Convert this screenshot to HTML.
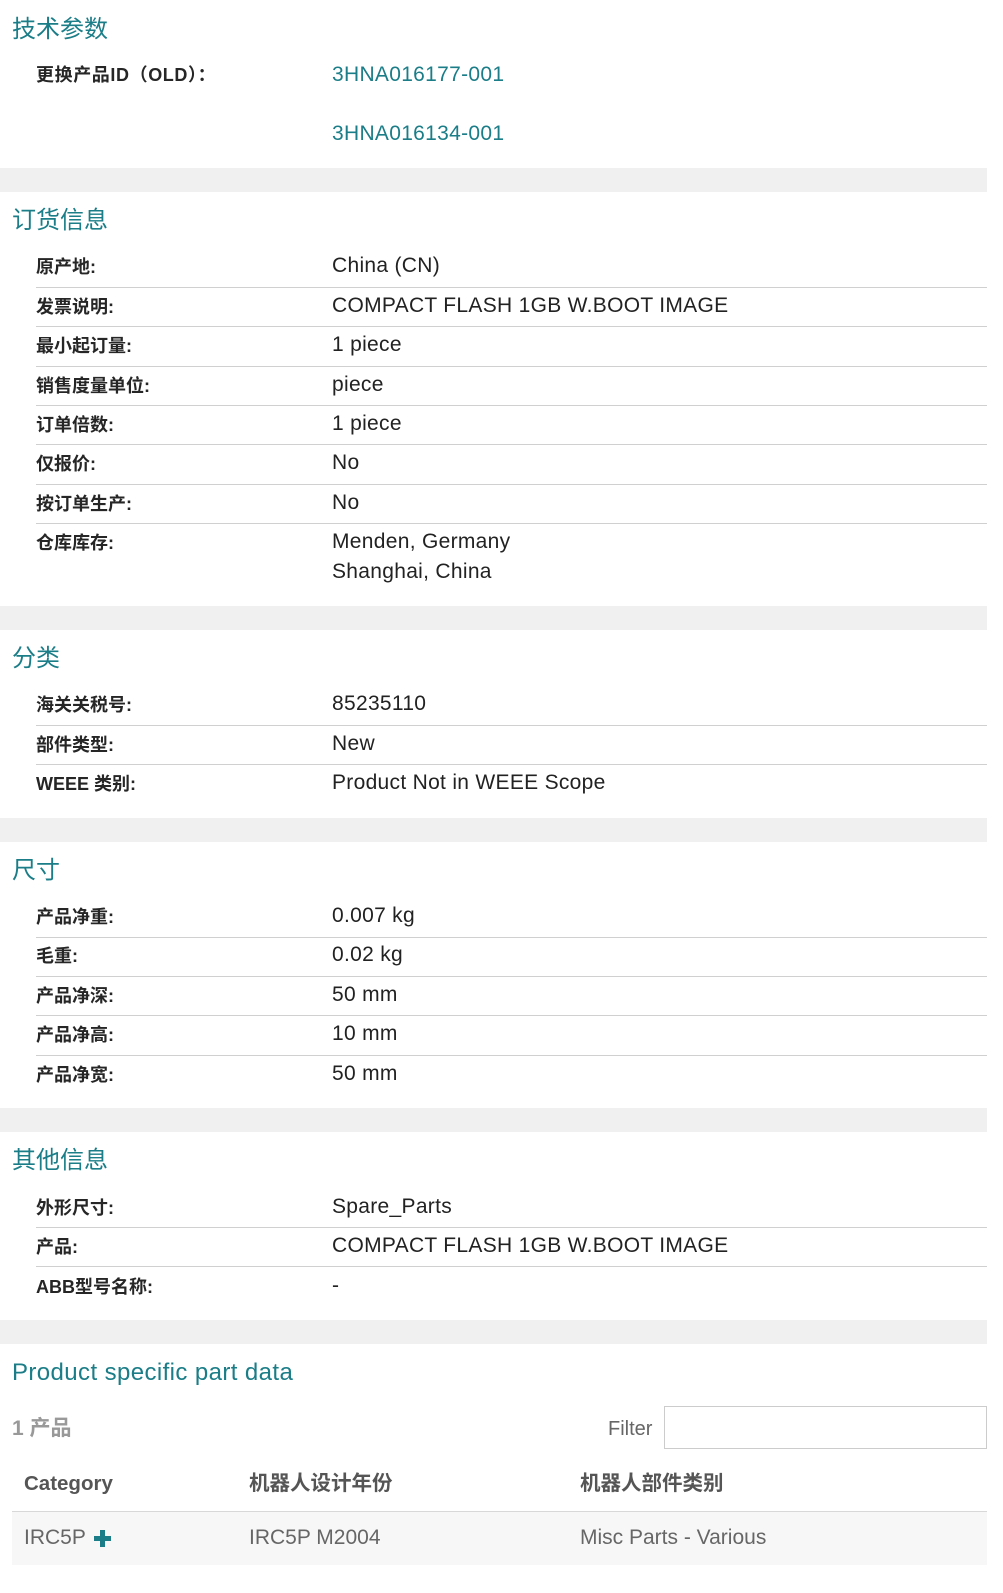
<!DOCTYPE html>
<html><head><meta charset="utf-8"><style>
body{margin:0;width:1003px;height:1593px;position:relative;background:#fff;font-family:"Liberation Sans","Noto Sans CJK SC",sans-serif;overflow:hidden}
div{position:absolute;white-space:nowrap}
.t{left:12px;font-size:24px;color:#1a7d87;line-height:28px}
.l{left:36px;font-size:18px;font-weight:bold;color:#262626;line-height:22px;margin-top:0px}
.v{left:332px;font-size:21px;color:#222;line-height:22px;letter-spacing:0.3px}
.a{color:#1a7d87}
.ln{left:36px;width:951px;height:1px;background:#d0d0d0}
.b{left:0;width:987px;height:24px;background:#f0f0f0}
.g{color:#666;font-size:21px;line-height:22px}
</style></head><body>
<div class="t" style="top:16px">技术参数</div>
<div class="l" style="top:64px;letter-spacing:0.6px">更换产品ID（OLD）：</div>
<div class="v a" style="top:64px">3HNA016177-001</div>
<div class="v a" style="top:123px">3HNA016134-001</div>
<div class="b" style="top:168px"></div>

<div class="t" style="top:207px">订货信息</div>
<div class="l" style="top:256px">原产地:</div><div class="v" style="top:255px">China (CN)</div>
<div class="ln" style="top:287px"></div>
<div class="l" style="top:296px">发票说明:</div><div class="v" style="top:295px">COMPACT FLASH 1GB W.BOOT IMAGE</div>
<div class="ln" style="top:326px"></div>
<div class="l" style="top:335px">最小起订量:</div><div class="v" style="top:334px">1 piece</div>
<div class="ln" style="top:366px"></div>
<div class="l" style="top:375px">销售度量单位:</div><div class="v" style="top:374px">piece</div>
<div class="ln" style="top:405px"></div>
<div class="l" style="top:414px">订单倍数:</div><div class="v" style="top:413px">1 piece</div>
<div class="ln" style="top:444px"></div>
<div class="l" style="top:453px">仅报价:</div><div class="v" style="top:452px">No</div>
<div class="ln" style="top:484px"></div>
<div class="l" style="top:493px">按订单生产:</div><div class="v" style="top:492px">No</div>
<div class="ln" style="top:523px"></div>
<div class="l" style="top:532px">仓库库存:</div><div class="v" style="line-height:30px;top:527px">Menden, Germany<br>Shanghai, China</div>
<div class="b" style="top:606px"></div>

<div class="t" style="top:645px">分类</div>
<div class="l" style="top:694px">海关关税号:</div><div class="v" style="top:693px">85235110</div>
<div class="ln" style="top:725px"></div>
<div class="l" style="top:734px">部件类型:</div><div class="v" style="top:733px">New</div>
<div class="ln" style="top:764px"></div>
<div class="l" style="top:773px">WEEE 类别:</div><div class="v" style="top:772px">Product Not in WEEE Scope</div>
<div class="b" style="top:818px"></div>

<div class="t" style="top:857px">尺寸</div>
<div class="l" style="top:906px">产品净重:</div><div class="v" style="top:905px">0.007 kg</div>
<div class="ln" style="top:937px"></div>
<div class="l" style="top:945px">毛重:</div><div class="v" style="top:944px">0.02 kg</div>
<div class="ln" style="top:976px"></div>
<div class="l" style="top:985px">产品净深:</div><div class="v" style="top:984px">50 mm</div>
<div class="ln" style="top:1015px"></div>
<div class="l" style="top:1024px">产品净高:</div><div class="v" style="top:1023px">10 mm</div>
<div class="ln" style="top:1055px"></div>
<div class="l" style="top:1064px">产品净宽:</div><div class="v" style="top:1063px">50 mm</div>
<div class="b" style="top:1108px"></div>

<div class="t" style="top:1147px">其他信息</div>
<div class="l" style="top:1197px">外形尺寸:</div><div class="v" style="top:1196px">Spare_Parts</div>
<div class="ln" style="top:1227px"></div>
<div class="l" style="top:1236px">产品:</div><div class="v" style="top:1235px">COMPACT FLASH 1GB W.BOOT IMAGE</div>
<div class="ln" style="top:1266px"></div>
<div class="l" style="top:1276px">ABB型号名称:</div><div class="v" style="top:1275px">-</div>
<div class="b" style="top:1320px"></div>

<div class="t" style="top:1359px;letter-spacing:0.4px">Product specific part data</div>
<div style="left:12px;top:1417px;font-size:21px;font-weight:bold;color:#999;line-height:24px">1 产品</div>
<div class="g" style="left:608px;top:1418px;font-size:20px">Filter</div>
<div style="left:664px;top:1406px;width:321px;height:41px;border:1px solid #ccc;background:#fff"></div>
<div style="left:24px;top:1473px;font-size:20.5px;font-weight:bold;color:#555;line-height:22px">Category</div>
<div style="left:249px;top:1473px;font-size:20.5px;font-weight:bold;color:#555;line-height:22px">机器人设计年份</div>
<div style="left:580px;top:1473px;font-size:20.5px;font-weight:bold;color:#555;line-height:22px">机器人部件类别</div>
<div style="left:12px;top:1511px;width:975px;height:1px;background:#d8d8d8"></div>
<div style="left:12px;top:1512px;width:975px;height:53px;background:#f7f7f7"></div>
<div class="g" style="left:24px;top:1527px">IRC5P</div>
<svg style="position:absolute;left:94px;top:1530px" width="17" height="17" viewBox="0 0 17 17"><path d="M6 0h5v6h6v5h-6v6h-5v-6h-6v-5h6z" fill="#1a7d87"/></svg>
<div class="g" style="left:249px;top:1527px">IRC5P M2004</div>
<div class="g" style="left:580px;top:1527px">Misc Parts - Various</div>
</body></html>
